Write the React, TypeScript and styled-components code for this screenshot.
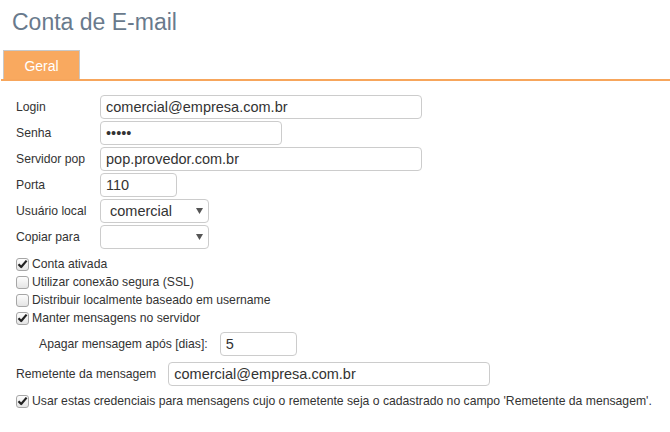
import React from "react";
import styled, { createGlobalStyle } from "styled-components";

const Global = createGlobalStyle`
  html, body { margin: 0; padding: 0; background: #fff; }
  body { font-family: "Liberation Sans", Arial, sans-serif; color: #333; }
  * { box-sizing: border-box; }
`;

const Page = styled.div`
  width: 670px;
  padding-top: 9px;
`;

const Title = styled.h1`
  margin: 0 0 15px 12px;
  font-size: 23px;
  line-height: 26px;
  font-weight: normal;
  color: #697a8c;
`;

const TabBar = styled.div`
  display: flex;
  margin-left: 1px;
  padding-left: 2px;
  border-bottom: 2px solid #f7a65c;
`;

const Tab = styled.div`
  width: 77px;
  height: 29px;
  background: #f9a95f;
  border: 1px solid #c8c8c8;
  border-bottom: none;
  color: #fff;
  font-size: 14px;
  display: flex;
  align-items: center;
  justify-content: center;
  padding-top: 1px;
`;

const Form = styled.div`
  padding: 14px 0 0 16px;
  display: flex;
  flex-direction: column;
`;

const Grid = styled.div`
  display: grid;
  grid-template-columns: 84px auto;
  row-gap: 2px;
  align-items: center;
  justify-items: start;
`;

const Label = styled.label`
  font-size: 12.2px;
  color: #333;
`;

const TextInput = styled.input<{ $w: number }>`
  width: ${(p) => p.$w}px;
  height: 24px;
  border: 1px solid #cccccc;
  border-radius: 4px;
  padding: 0 5px;
  font-family: "Liberation Sans", Arial, sans-serif;
  font-size: 14.5px;
  color: #333;
  background: #fff;
  outline: none;
`;

const SelectWrap = styled.div`
  position: relative;
  width: 109px;
  height: 24px;
`;

const Select = styled.select`
  appearance: none;
  -webkit-appearance: none;
  width: 100%;
  height: 100%;
  border: 1px solid #cccccc;
  border-radius: 4px;
  padding: 0 0 0 9px;
  font-family: "Liberation Sans", Arial, sans-serif;
  font-size: 14.5px;
  color: #333;
  background: #fff;
  outline: none;
`;

const Arrow = styled.svg`
  position: absolute;
  right: 6px;
  top: 9px;
  pointer-events: none;
`;

const Checks = styled.div`
  display: flex;
  flex-direction: column;
  margin-top: 6px;
`;

const CheckRow = styled.label`
  display: flex;
  align-items: center;
  height: 18px;
  font-size: 12.2px;
  color: #333;
  gap: 3px;
`;

const Box = styled.span`
  width: 13px;
  height: 13px;
  border: 1px solid #a6a6a6;
  border-radius: 3px;
  background: linear-gradient(#fdfdfd, #e4e4e4);
  display: flex;
  align-items: center;
  justify-content: center;
  flex: none;
`;

const InlineRow = styled.div<{ $indent: number; $top: number }>`
  display: flex;
  align-items: center;
  gap: 12px;
  padding-left: ${(p) => p.$indent}px;
  margin-top: ${(p) => p.$top}px;
`;

const Check = ({ checked, children }: { checked?: boolean; children: React.ReactNode }) => (
  <CheckRow>
    <Box>
      {checked && (
        <svg width="11" height="10" viewBox="0 0 11 10">
          <path d="M1.5 5.2 L4.2 8 L9.6 1.6" fill="none" stroke="#222" strokeWidth="2.2" strokeLinejoin="round" />
        </svg>
      )}
    </Box>
    <span>{children}</span>
  </CheckRow>
);

const Dropdown = ({ value }: { value: string }) => (
  <SelectWrap>
    <Select defaultValue={value}>
      <option value={value}>{value}</option>
    </Select>
    <Arrow width="7" height="6" viewBox="0 0 7 6">
      <path d="M0 0 H7 L3.5 6 Z" fill="#555" />
    </Arrow>
  </SelectWrap>
);

export default function App() {
  return (
    <Page>
      <Global />
      <Title>Conta de E-mail</Title>
      <TabBar>
        <Tab>Geral</Tab>
      </TabBar>
      <Form>
        <Grid>
          <Label>Login</Label>
          <TextInput $w={322} defaultValue="comercial@empresa.com.br" />
          <Label>Senha</Label>
          <TextInput $w={182} type="password" defaultValue="12345" />
          <Label>Servidor pop</Label>
          <TextInput $w={322} defaultValue="pop.provedor.com.br" />
          <Label>Porta</Label>
          <TextInput $w={77} defaultValue="110" />
          <Label>Usuário local</Label>
          <Dropdown value="comercial" />
          <Label>Copiar para</Label>
          <Dropdown value="" />
        </Grid>
        <Checks>
          <Check checked>Conta ativada</Check>
          <Check>Utilizar conexão segura (SSL)</Check>
          <Check>Distribuir localmente baseado em username</Check>
          <Check checked>Manter mensagens no servidor</Check>
        </Checks>
        <InlineRow $indent={23} $top={5}>
          <Label>Apagar mensagem após [dias]:</Label>
          <TextInput $w={77} defaultValue="5" />
        </InlineRow>
        <InlineRow $indent={0} $top={6}>
          <Label>Remetente da mensagem</Label>
          <TextInput $w={322} defaultValue="comercial@empresa.com.br" />
        </InlineRow>
        <Checks>
          <Check checked>
            Usar estas credenciais para mensagens cujo o remetente seja o cadastrado no campo 'Remetente da mensagem'.
          </Check>
        </Checks>
      </Form>
    </Page>
  );
}
